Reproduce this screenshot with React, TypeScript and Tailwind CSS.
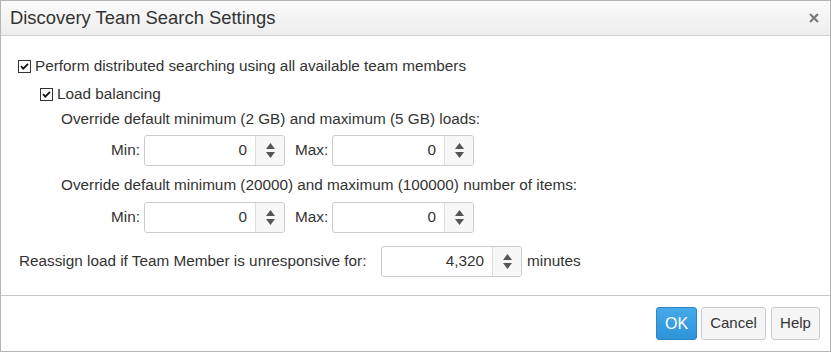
import React from "react";

const font = { fontFamily: '"Liberation Sans", Arial, sans-serif' };

function CheckBox() {
  return (
    <svg width="13" height="13" viewBox="0 0 13 13" className="shrink-0">
      <rect x="0.5" y="0.5" width="12" height="12" fill="#fff" stroke="#333" />
      <path d="M3 6.2 L5.3 8.6 L10 3.8" fill="none" stroke="#111" strokeWidth="1.8" />
    </svg>
  );
}

function Spinner({ value, width }: { value: string; width: string }) {
  return (
    <div className={`flex h-[31px] ${width} rounded-[3px] border border-[#cccccc] bg-white overflow-hidden`}>
      <div className="flex-1 flex items-center justify-end pr-[8px] text-[#333]">{value}</div>
      <div className="w-[29px] flex flex-col items-center justify-center gap-[3px] border-l border-[#dddddd] bg-[#f7f7f7]">
        <svg width="9" height="6" viewBox="0 0 9 6">
          <path d="M4.5 0 L9 6 L0 6 Z" fill="#555" />
        </svg>
        <svg width="9" height="6" viewBox="0 0 9 6">
          <path d="M0 0 L9 0 L4.5 6 Z" fill="#555" />
        </svg>
      </div>
    </div>
  );
}

function MinMaxRow() {
  return (
    <div className="flex items-center pl-[93px]">
      <span className="w-[33px]">Min:</span>
      <Spinner value="0" width="w-[141px]" />
      <span className="ml-[10px] w-[37px]">Max:</span>
      <Spinner value="0" width="w-[142px]" />
    </div>
  );
}

export default function App() {
  return (
    <div
      className="w-[831px] h-[352px] flex flex-col border border-[#b5b5b5] bg-white text-[15.3px] text-[#333]"
      style={font}
    >
      <header className="h-[35px] shrink-0 flex items-center justify-between pl-[9px] pr-[11px] border-b border-[#d0d0d0] bg-gradient-to-b from-[#fafafa] to-[#eeeeee]">
        <h2 className="text-[18.4px] text-[#333]">Discovery Team Search Settings</h2>
        <svg width="10" height="10" viewBox="0 0 10 10">
          <path d="M1 1 L9 9 M9 1 L1 9" stroke="#7a7a7a" strokeWidth="2.2" />
        </svg>
      </header>

      <section className="flex-1 flex flex-col pt-[20px] pl-[17px]">
        <label className="flex items-center gap-[4px] h-[20px]">
          <CheckBox />
          <span>Perform distributed searching using all available team members</span>
        </label>
        <label className="flex items-center gap-[4px] h-[20px] mt-[8px] ml-[22px]">
          <CheckBox />
          <span>Load balancing</span>
        </label>
        <p className="h-[20px] leading-[20px] mt-[5px] ml-[43px]">
          Override default minimum (2 GB) and maximum (5 GB) loads:
        </p>
        <div className="mt-[6px]">
          <MinMaxRow />
        </div>
        <p className="h-[20px] leading-[20px] mt-[9px] ml-[43px]">
          Override default minimum (20000) and maximum (100000) number of items:
        </p>
        <div className="mt-[7px]">
          <MinMaxRow />
        </div>
        <div className="flex items-center mt-[13px] ml-[1px]">
          <span className="w-[362px]">Reassign load if Team Member is unresponsive for:</span>
          <Spinner value="4,320" width="w-[141px]" />
          <span className="ml-[5px]">minutes</span>
        </div>
      </section>

      <footer className="h-[56px] shrink-0 flex items-center justify-end gap-[4px] pr-[10px] border-t border-[#c8c8c8]">
        <button className="h-[33px] w-[41px] text-[16px] text-white rounded-[3px] border border-[#2a88c9] bg-gradient-to-b from-[#45a9ea] to-[#2f93d8]">
          OK
        </button>
        <button className="h-[33px] w-[65px] text-[15px] text-[#333] rounded-[3px] border border-[#cccccc] bg-[#f5f5f5]">
          Cancel
        </button>
        <button className="h-[33px] w-[49px] ml-[1px] text-[15px] text-[#333] rounded-[3px] border border-[#cccccc] bg-[#f5f5f5]">
          Help
        </button>
      </footer>
    </div>
  );
}
